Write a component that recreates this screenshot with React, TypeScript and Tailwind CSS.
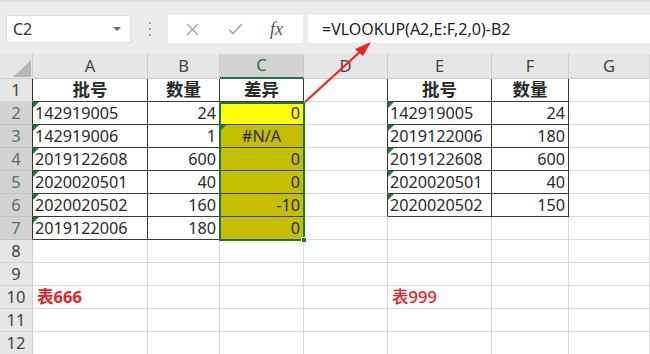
import React from "react";

const COLS = [
  { key: "", w: 33 },
  { key: "A", w: 115 },
  { key: "B", w: 72 },
  { key: "C", w: 84 },
  { key: "D", w: 84 },
  { key: "E", w: 104 },
  { key: "F", w: 77 },
  { key: "G", w: 81 },
];

type Cell = { t: string; align?: "l" | "r" | "c"; bold?: boolean; tri?: boolean; bg?: string; red?: boolean; thin?: boolean };

const data: Record<string, Cell> = {
  A1: { t: "批号", align: "c", bold: true },
  B1: { t: "数量", align: "c", bold: true },
  C1: { t: "差异", align: "c", bold: true },
  E1: { t: "批号", align: "c", bold: true },
  F1: { t: "数量", align: "c", bold: true },
  A2: { t: "142919005", tri: true }, B2: { t: "24", align: "r" }, C2: { t: "0", align: "r", bg: "bg-[#ffff00]" },
  A3: { t: "142919006", tri: true }, B3: { t: "1", align: "r" }, C3: { t: "#N/A", align: "c", bg: "bg-[#c4c000]", tri: true },
  A4: { t: "2019122608", tri: true }, B4: { t: "600", align: "r" }, C4: { t: "0", align: "r", bg: "bg-[#c4c000]" },
  A5: { t: "2020020501", tri: true }, B5: { t: "40", align: "r" }, C5: { t: "0", align: "r", bg: "bg-[#c4c000]" },
  A6: { t: "2020020502", tri: true }, B6: { t: "160", align: "r" }, C6: { t: "-10", align: "r", bg: "bg-[#c4c000]" },
  A7: { t: "2019122006", tri: true }, B7: { t: "180", align: "r" }, C7: { t: "0", align: "r", bg: "bg-[#c4c000]" },
  E2: { t: "142919005", tri: true }, F2: { t: "24", align: "r" },
  E3: { t: "2019122006", tri: true }, F3: { t: "180", align: "r" },
  E4: { t: "2019122608", tri: true }, F4: { t: "600", align: "r" },
  E5: { t: "2020020501", tri: true }, F5: { t: "40", align: "r" },
  E6: { t: "2020020502", tri: true }, F6: { t: "150", align: "r" },
  A10: { t: "表666", red: true, bold: true },
  E10: { t: "表999", red: true, thin: true },
};

function inTable(col: string, row: number) {
  if (["A", "B", "C"].includes(col) && row >= 1 && row <= 7) return true;
  if (["E", "F"].includes(col) && row >= 1 && row <= 6) return true;
  return false;
}

const font = { fontFamily: '"Noto Sans", "Noto Sans CJK SC", sans-serif' };

export default function App() {
  const rows = Array.from({ length: 12 }, (_, i) => i + 1);
  const gridCols = COLS.map((c) => `${c.w}px`).join(" ");
  return (
    <div className="w-[650px] h-[354px] overflow-hidden bg-white relative" style={font}>
      {/* formula bar */}
      <div className="h-[54px] bg-[#ececec] border-t-2 border-[#dcdcdc] flex items-start pt-[13px] pl-[6px]">
        <div className="w-[125px] h-[28px] bg-white border border-[#dedede] flex items-center justify-between pl-[6px] pr-[9px]">
          <span className="text-[16px] text-[#333]">C2</span>
          <div className="w-0 h-0 border-l-[4px] border-r-[4px] border-t-[4px] border-l-transparent border-r-transparent border-t-[#6b6b6b]" />
        </div>
        <div className="w-[37px] h-[28px] flex flex-col items-center justify-center gap-[4px]">
          <div className="w-[2px] h-[2px] bg-[#a8a8a8]" />
          <div className="w-[2px] h-[2px] bg-[#a8a8a8]" />
          <div className="w-[2px] h-[2px] bg-[#a8a8a8]" />
        </div>
        <div className="w-[135px] h-[28px] bg-white flex items-center">
          <svg className="ml-[18px]" width="13" height="13" viewBox="0 0 13 13">
            <path d="M1 1L12 12M12 1L1 12" stroke="#a3a3a3" strokeWidth="1.4" />
          </svg>
          <svg className="ml-[29px]" width="15" height="12" viewBox="0 0 15 12">
            <path d="M1 6.5L5 10.5L14 1" stroke="#a3a3a3" strokeWidth="1.5" fill="none" />
          </svg>
          <span className="ml-[27px] text-[18px] italic text-[#555]" style={{ fontFamily: '"Liberation Serif", serif' }}>fx</span>
        </div>
        <div className="ml-[5px] flex-1 h-[28px] bg-white flex items-center pl-[14px]">
          <span className="text-[16px] text-[#222]">=VLOOKUP(A2,E:F,2,0)-B2</span>
        </div>
      </div>

      {/* grid */}
      <div className="relative grid" style={{ gridTemplateColumns: gridCols }}>
        {COLS.map((c, i) => {
          if (i === 0) {
            return (
              <div key="corner" className="h-[25px] bg-[#e6e6e6] border-r border-b border-[#cfcfcf] relative">
                <svg className="absolute left-[13px] top-[6px]" width="18" height="17" viewBox="0 0 18 17">
                  <path d="M18 0L18 17L0 17Z" fill="#b8b8b8" />
                </svg>
              </div>
            );
          }
          const sel = c.key === "C";
          return (
            <div
              key={c.key}
              className={`h-[25px] flex items-center justify-center text-[16.5px] border-r ${sel ? "bg-[#d3d3d3] text-[#217346] border-b-2 border-b-[#217346] border-r-[#c8c8c8]" : "bg-[#e6e6e6] text-[#444] border-b border-[#cfcfcf]"}`}
            >
              {c.key}
            </div>
          );
        })}
        {rows.map((r) =>
          COLS.map((c, i) => {
            if (i === 0) {
              const sel = r >= 2 && r <= 7;
              const dark = r <= 7;
              return (
                <div
                  key={`h${r}`}
                  className={`h-[23px] flex items-center justify-center text-[16.5px] border-b border-r ${sel ? "bg-[#d3d3d3] text-[#4e7a62] border-b-[#c4c4c4]" : "bg-[#e6e6e6] text-[#444] border-b-[#d4d4d4]"} ${dark ? "border-r-[#333]" : "border-r-[#cfcfcf]"}`}
                >
                  {r}
                </div>
              );
            }
            const id = `${c.key}${r}`;
            const cell = data[id];
            const next = COLS[i + 1]?.key;
            const rightDark = inTable(c.key, r) || (next ? inTable(next, r) : false);
            const bottomDark = inTable(c.key, r) || inTable(c.key, r + 1);
            const align = cell?.align === "r" ? "justify-end pr-[3px]" : cell?.align === "c" ? "justify-center" : "justify-start pl-[2px]";
            const size = cell?.red ? "text-[16.5px]" : cell?.bold ? "text-[17.5px]" : "text-[16.2px]";
            return (
              <div
                key={id}
                className={`h-[23px] relative flex items-center border-r border-b whitespace-nowrap ${cell?.bg ?? "bg-white"} ${rightDark ? "border-r-[#3a3a3a]" : "border-r-[#dadada]"} ${bottomDark ? "border-b-[#3a3a3a]" : "border-b-[#dadada]"} ${align}`}
              >
                {cell?.tri && (
                  <svg className="absolute left-0 top-0" width="6" height="6" viewBox="0 0 6 6">
                    <path d="M0 0H6L0 6Z" fill="#1f7a32" />
                  </svg>
                )}
                {cell && (
                  <span
                    className={`${size} leading-none ${cell.red ? "text-[#e8201e]" : "text-[#2a2a2a]"} ${cell.bold ? "font-bold" : ""} ${cell.thin ? "font-medium" : ""} ${cell.red ? "pl-[2px]" : ""}`}
                  >
                    {cell.t}
                  </span>
                )}
              </div>
            );
          })
        )}
        <div className="absolute left-[219px] top-[48px] w-[86px] h-[139px] border-2 border-[#217346] pointer-events-none" />
        <div className="absolute left-[301px] top-[183px] w-[6px] h-[6px] bg-[#217346] border border-white" />
      </div>

      <svg className="absolute left-0 top-0 pointer-events-none" width="650" height="354" viewBox="0 0 650 354">
        <line x1="305" y1="102" x2="362" y2="50" stroke="#e8261f" strokeWidth="2.2" />
        <path d="M371 42L355 49L363 56Z" fill="#e8261f" />
      </svg>
    </div>
  );
}
